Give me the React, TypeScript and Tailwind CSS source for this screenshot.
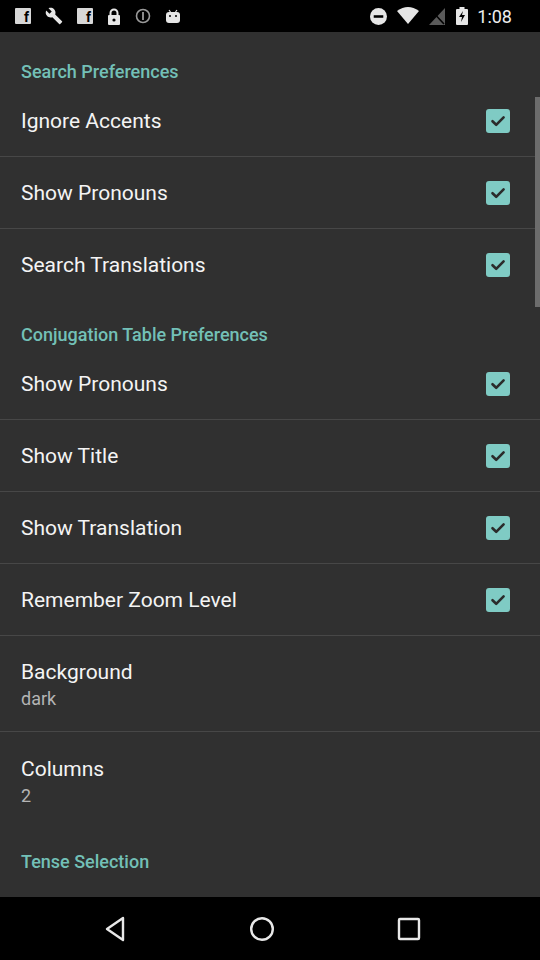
type Row = { title: string; summary?: string; checked?: boolean };

const sections: { header: string; rows: Row[] }[] = [
  {
    header: "Search Preferences",
    rows: [
      { title: "Ignore Accents", checked: true },
      { title: "Show Pronouns", checked: true },
      { title: "Search Translations", checked: true },
    ],
  },
  {
    header: "Conjugation Table Preferences",
    rows: [
      { title: "Show Pronouns", checked: true },
      { title: "Show Title", checked: true },
      { title: "Show Translation", checked: true },
      { title: "Remember Zoom Level", checked: true },
      { title: "Background", summary: "dark" },
      { title: "Columns", summary: "2" },
    ],
  },
  { header: "Tense Selection", rows: [] },
];

function CheckBox() {
  return (
    <div className="w-[24px] h-[24px] rounded-[3px] bg-[#7fcbc4] flex items-center justify-center">
      <svg width="24" height="24" viewBox="0 0 24 24">
        <path d="M6.5 12.2 L10.2 15.8 L17.6 8.4" fill="none" stroke="#2b2b2b" strokeWidth="2.6" strokeLinecap="round" strokeLinejoin="round" />
      </svg>
    </div>
  );
}

function StatusBar() {
  return (
    <div className="h-[32px] bg-black flex items-center justify-between pl-[15px] pr-[28px] text-[#e6e6e6]">
      <div className="flex items-center gap-[14px]">
        <div className="w-[16px] h-[16px] bg-[#d8d8d8] rounded-[1px] flex items-end justify-end pr-[2px] text-black font-bold text-[14px] leading-none">f</div>
        <svg width="18" height="18" viewBox="0 0 24 24"><path d="M22.7 19l-9.1-9.1c.9-2.3.4-5-1.5-6.9-2-2-5-2.4-7.4-1.3L9 6 6 9 1.6 4.7C.4 7.1.9 10.1 2.9 12.1c1.9 1.9 4.6 2.4 6.9 1.5l9.1 9.1c.4.4 1 .4 1.4 0l2.3-2.3c.5-.4.5-1.1.1-1.4z" fill="#e6e6e6" /></svg>
        <div className="w-[16px] h-[16px] bg-[#d8d8d8] rounded-[1px] flex items-end justify-end pr-[2px] text-black font-bold text-[14px] leading-none">f</div>
        <svg width="14" height="17" viewBox="0 0 14 17"><path d="M3.5 7V5a3.5 3.5 0 0 1 7 0v2" fill="none" stroke="#e6e6e6" strokeWidth="2" /><rect x="1" y="7" width="12" height="10" rx="1" fill="#e6e6e6" /><circle cx="7" cy="12" r="1.6" fill="#000" /></svg>
        <svg width="16" height="16" viewBox="0 0 16 16"><circle cx="8" cy="8" r="6.5" fill="none" stroke="#9a9a9a" strokeWidth="1.6" /><rect x="7.1" y="4" width="1.8" height="8" fill="#9a9a9a" /></svg>
        <svg width="16" height="16" viewBox="0 0 16 16"><path d="M4 2 L5.5 4 M12 2 L10.5 4" stroke="#e6e6e6" strokeWidth="1.2" /><rect x="1" y="4" width="14" height="11" rx="3" fill="#e6e6e6" /><circle cx="5" cy="8" r="1" fill="#000" /><circle cx="11" cy="8" r="1" fill="#000" /></svg>
      </div>
      <div className="flex items-center">
        <svg width="17" height="17" viewBox="0 0 16 16"><circle cx="8" cy="8" r="8" fill="#e6e6e6" /><rect x="3.5" y="6.8" width="9" height="2.4" fill="#000" /></svg>
        <svg className="ml-[10px]" width="22" height="18" viewBox="0 0 22 18"><path d="M0 4 Q11 -4 22 4 L11 17 Z" fill="#e6e6e6" /></svg>
        <svg className="ml-[10px]" width="16" height="17" viewBox="0 0 16 17"><path d="M16 0 V17 H0 Z" fill="#5a5a5a" /><path d="M1 1 L15 16" stroke="#000" strokeWidth="1.6" /></svg>
        <svg className="ml-[11px]" width="12" height="18" viewBox="0 0 12 18"><rect x="3.5" y="0" width="5" height="2" fill="#e6e6e6" /><rect x="0" y="2" width="12" height="16" rx="1" fill="#e6e6e6" /><path d="M7 4 L3 10 H6 L5 15 L9 8 H6 Z" fill="#000" /></svg>
        <span className="ml-[9px] text-[18px] text-[#eeeeee]">1:08</span>
      </div>
    </div>
  );
}

function NavBar() {
  return (
    <div className="h-[63px] bg-black flex items-center pl-[41px]">
      <div className="w-[147px] flex justify-center">
        <svg width="22" height="26" viewBox="0 0 22 26"><path d="M19 2 L3 13 L19 24 Z" fill="none" stroke="#e8e8e8" strokeWidth="2.4" strokeLinejoin="round" /></svg>
      </div>
      <div className="w-[147px] flex justify-center">
        <svg width="26" height="26" viewBox="0 0 26 26"><circle cx="13" cy="13" r="10.8" fill="none" stroke="#e8e8e8" strokeWidth="2.4" /></svg>
      </div>
      <div className="w-[147px] flex justify-center">
        <svg width="24" height="24" viewBox="0 0 24 24"><rect x="2" y="2" width="20" height="20" rx="1" fill="none" stroke="#e8e8e8" strokeWidth="2.4" /></svg>
      </div>
    </div>
  );
}

export default function App() {
  return (
    <div className="w-[540px] h-[960px] flex flex-col bg-[#303030] overflow-hidden" style={{ fontFamily: "Roboto, 'Noto Sans', sans-serif" }}>
      <StatusBar />
      <div className="relative flex-1 overflow-hidden pt-[6px]">
        {sections.map((s, si) => (
          <div key={si}>
            <div className="pt-[23px] pb-[2px] px-[21px] text-[18px] leading-[22px] font-medium text-[#73c0b7]">{s.header}</div>
            {s.rows.map((r, ri) => {
              const last = ri === s.rows.length - 1;
              return (
                <div
                  key={ri}
                  className={
                    "flex items-center justify-between pl-[21px] pr-[30px] " +
                    (r.summary ? "h-[96px] " : "h-[72px] ") +
                    (last ? "" : "border-b border-[#474747]")
                  }
                >
                  <div className={"flex flex-col " + (r.summary ? "translate-y-[1px]" : "")}>
                    <span className="text-[21px] leading-[26px] text-[#f4f4f4]">{r.title}</span>
                    {r.summary && <span className="text-[18px] leading-[22px] mt-[3px] text-[#b4b4b4]">{r.summary}</span>}
                  </div>
                  {r.checked && <CheckBox />}
                </div>
              );
            })}
          </div>
        ))}
        <div className="absolute right-0 top-[65px] w-[5px] h-[210px] bg-[#6c6c6c]" />
      </div>
      <NavBar />
    </div>
  );
}
